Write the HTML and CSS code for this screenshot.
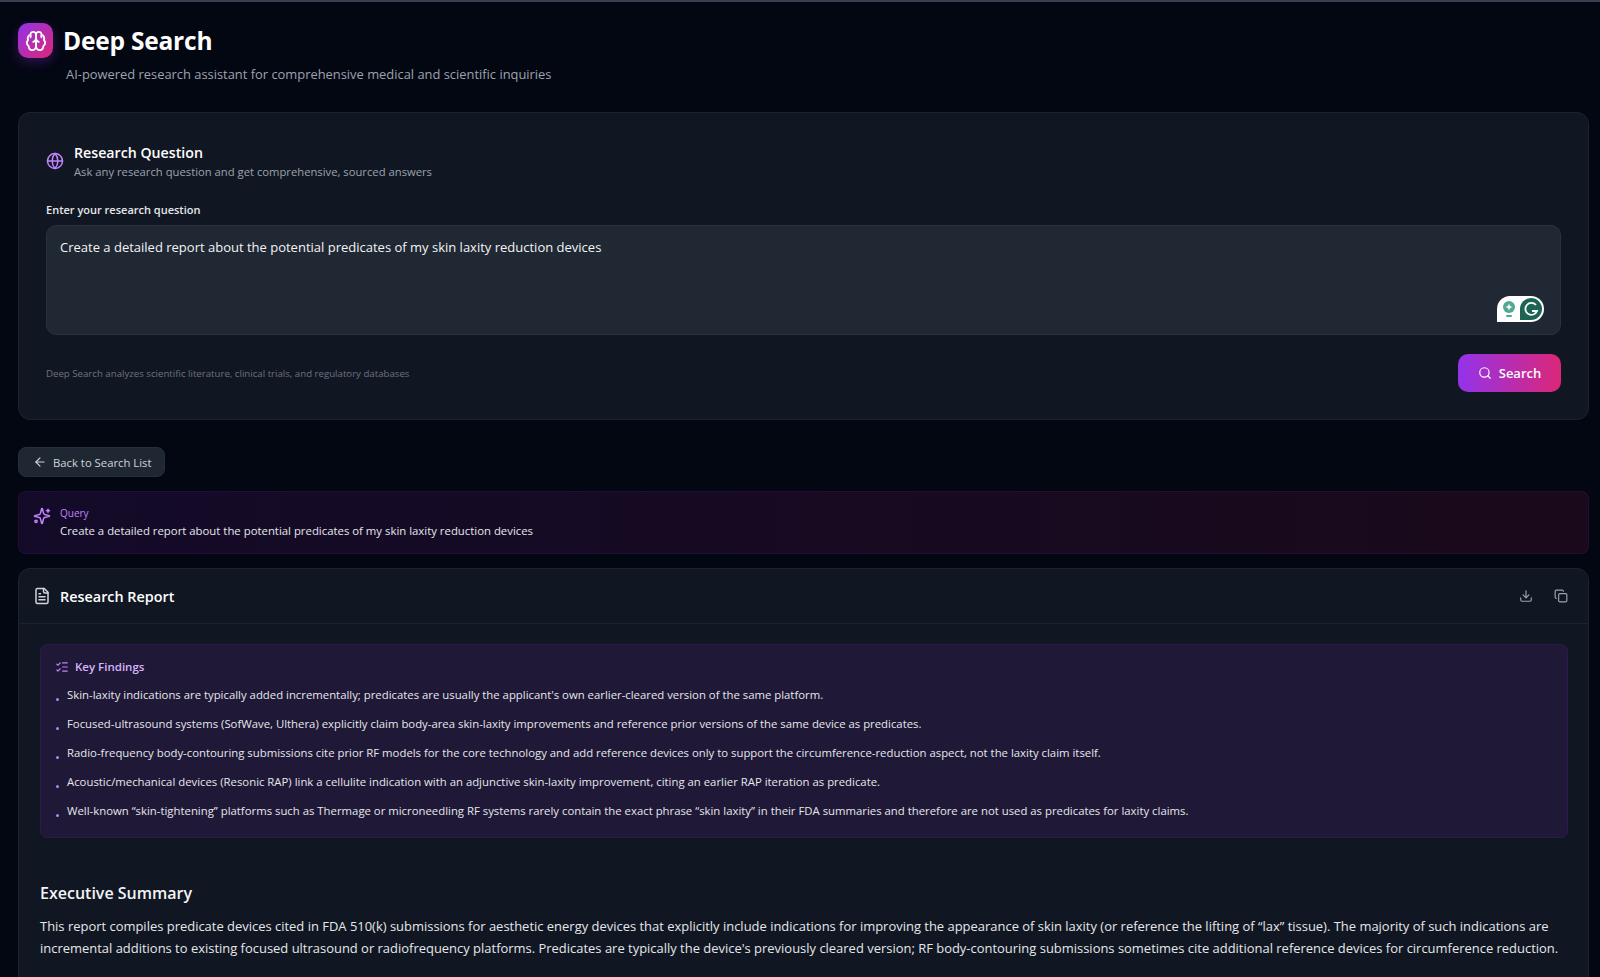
FILE: index.html
```html
<!DOCTYPE html>
<html lang="en">
<head>
    <meta charset="UTF-8">
    <meta name="viewport" content="width=device-width, initial-scale=1.0">
    <title>Deep Search</title>
    <link rel="stylesheet" href="styles.css">
</head>
<body>
    <header class="page-header">
        <div class="title-row">
            <div class="logo">
                <svg width="22" height="22" viewBox="0 0 24 24" fill="none" stroke="#fff" stroke-width="2" stroke-linecap="round" stroke-linejoin="round">
                    <path d="M12 5a3 3 0 1 0-5.997.125 4 4 0 0 0-2.526 5.77 4 4 0 0 0 .556 6.588A4 4 0 1 0 12 18Z"/>
                    <path d="M12 5a3 3 0 1 1 5.997.125 4 4 0 0 1 2.526 5.77 4 4 0 0 1-.556 6.588A4 4 0 1 1 12 18Z"/>
                    <path d="M15 13a4.5 4.5 0 0 1-3-4 4.5 4.5 0 0 1-3 4"/>
                    <path d="M17.6 6.5A3 3 0 0 1 18 8"/><path d="M6.4 6.5A3 3 0 0 0 6 8"/>
                </svg>
            </div>
            <h1>Deep Search</h1>
        </div>
        <p class="subtitle">AI-powered research assistant for comprehensive medical and scientific inquiries</p>
    </header>

    <section class="card question-card">
        <div class="card-heading">
            <svg class="globe" width="18" height="18" viewBox="0 0 24 24" fill="none" stroke="#c084fc" stroke-width="2" stroke-linecap="round" stroke-linejoin="round">
                <circle cx="12" cy="12" r="10"/><path d="M2 12h20"/><path d="M12 2a15 15 0 0 1 0 20a15 15 0 0 1 0-20"/>
            </svg>
            <div>
                <h2>Research Question</h2>
                <p>Ask any research question and get comprehensive, sourced answers</p>
            </div>
        </div>
        <label class="field-label" for="question">Enter your research question</label>
        <div class="textarea-wrap">
            <textarea id="question">Create a detailed report about the potential predicates of my skin laxity reduction devices</textarea>
            <div class="grammarly">
                <svg width="16" height="18" viewBox="0 0 16 18"><circle cx="8" cy="7" r="6" fill="#4fa893"/><path d="M8 3.5l1 2.5 2.500 1-2.500 1-1 2.500-1-2.500-2.500-1 2.500-1z" fill="#fff"/><rect x="5" y="15" width="6" height="2" rx="1" fill="#4fa893"/></svg>
                <svg width="24" height="24" viewBox="0 0 24 24"><path d="M12 1a11 11 0 1 1 0 22H1v-11A11 11 0 0 1 12 1z" fill="#1c6454"/><path d="M17 8a6 6 0 1 0 1 6h-5" fill="none" stroke="#fff" stroke-width="1.800"/></svg>
            </div>
        </div>
        <div class="card-foot">
            <span class="hint">Deep Search analyzes scientific literature, clinical trials, and regulatory databases</span>
            <button class="search-btn" type="button">
                <svg width="14" height="14" viewBox="0 0 24 24" fill="none" stroke="currentColor" stroke-width="2" stroke-linecap="round"><circle cx="11" cy="11" r="8"/><path d="m21 21-4.300-4.300"/></svg>
                Search
            </button>
        </div>
    </section>

    <button class="back-btn" type="button">
        <svg width="14" height="14" viewBox="0 0 24 24" fill="none" stroke="currentColor" stroke-width="2" stroke-linecap="round" stroke-linejoin="round"><path d="m12 19-7-7 7-7"/><path d="M19 12H5"/></svg>
        Back to Search List
    </button>

    <section class="query-box">
        <svg class="query-icon" width="18" height="18" viewBox="0 0 24 24" fill="none" stroke="#c084fc" stroke-width="2" stroke-linecap="round" stroke-linejoin="round">
            <path d="M9.900 15.500A2 2 0 0 0 8.500 14.100l-6.100-1.600a.5.5 0 0 1 0-1l6.100-1.600A2 2 0 0 0 9.900 8.500l1.600-6.100a.5.5 0 0 1 1 0l1.600 6.100a2 2 0 0 0 1.400 1.400l6.100 1.600a.5.5 0 0 1 0 1l-6.100 1.600a2 2 0 0 0-1.400 1.400l-1.600 6.100a.5.5 0 0 1-1 0z"/>
            <path d="M20 3v4"/><path d="M22 5h-4"/><circle cx="4" cy="19" r="1.500"/>
        </svg>
        <div>
            <div class="query-label">Query</div>
            <div class="query-text">Create a detailed report about the potential predicates of my skin laxity reduction devices</div>
        </div>
    </section>

    <section class="card report">
        <div class="report-head">
            <div class="report-title">
                <svg width="18" height="18" viewBox="0 0 24 24" fill="none" stroke="#d1d5db" stroke-width="2" stroke-linecap="round" stroke-linejoin="round">
                    <path d="M15 2H6a2 2 0 0 0-2 2v16a2 2 0 0 0 2 2h12a2 2 0 0 0 2-2V7Z"/><path d="M14 2v4a2 2 0 0 0 2 2h4"/><path d="M8 13h8"/><path d="M8 17h8"/><path d="M8 9h2"/>
                </svg>
                <h3>Research Report</h3>
            </div>
            <div class="report-actions">
                <svg width="14" height="14" viewBox="0 0 24 24" fill="none" stroke="#9ca3af" stroke-width="2" stroke-linecap="round" stroke-linejoin="round"><path d="M12 3v12"/><path d="m7 10 5 5 5-5"/><path d="M21 15v4a2 2 0 0 1-2 2H5a2 2 0 0 1-2-2v-4"/></svg>
                <svg width="14" height="14" viewBox="0 0 24 24" fill="none" stroke="#9ca3af" stroke-width="2" stroke-linecap="round" stroke-linejoin="round"><rect x="8" y="8" width="14" height="14" rx="2"/><path d="M4 16c-1.100 0-2-.9-2-2V4c0-1.100.9-2 2-2h10c1.100 0 2 .9 2 2"/></svg>
            </div>
        </div>
        <div class="report-body">
            <div class="findings">
                <div class="findings-title">
                    <svg width="14" height="14" viewBox="0 0 24 24" fill="none" stroke="#c084fc" stroke-width="2" stroke-linecap="round" stroke-linejoin="round"><path d="M13 5h8"/><path d="M13 12h8"/><path d="M13 19h8"/><path d="m3 17 2 2 4-4"/><path d="m3 7 2 2 4-4"/></svg>
                    Key Findings
                </div>
                <ul>
                    <li>Skin-laxity indications are typically added incrementally; predicates are usually the applicant's own earlier-cleared version of the same platform.</li>
                    <li>Focused-ultrasound systems (SofWave, Ulthera) explicitly claim body-area skin-laxity improvements and reference prior versions of the same device as predicates.</li>
                    <li>Radio-frequency body-contouring submissions cite prior RF models for the core technology and add reference devices only to support the circumference-reduction aspect, not the laxity claim itself.</li>
                    <li>Acoustic/mechanical devices (Resonic RAP) link a cellulite indication with an adjunctive skin-laxity improvement, citing an earlier RAP iteration as predicate.</li>
                    <li>Well-known “skin-tightening” platforms such as Thermage or microneedling RF systems rarely contain the exact phrase “skin laxity” in their FDA summaries and therefore are not used as predicates for laxity claims.</li>
                </ul>
            </div>
            <h4>Executive Summary</h4>
            <p class="summary">This report compiles predicate devices cited in FDA 510(k) submissions for aesthetic energy devices that explicitly include indications for improving the appearance of skin laxity (or reference the lifting of “lax” tissue). The majority of such indications are incremental additions to existing focused ultrasound or radiofrequency platforms. Predicates are typically the device's previously cleared version; RF body-contouring submissions sometimes cite additional reference devices for circumference reduction.</p>
        </div>
    </section>
</body>
</html>
```

FILE: styles.css
```css
* {
    box-sizing: border-box;
}

html, body {
    height: 977px;
    overflow: hidden;
}

body {
    margin: 0;
    padding: 0 11px 0 18px;
    background-color: #030712;
    border-top: 2px solid #374151;
    color: #f3f4f6;
    font-family: "Open Sans", "Noto Sans", sans-serif;
}

h1, h2, h3, h4, p {
    margin: 0;
}

.page-header {
    padding-top: 21px;
    height: 110px;
}

.title-row {
    display: flex;
    align-items: center;
    gap: 10px;
}

.logo {
    width: 35px;
    height: 35px;
    border-radius: 10px;
    background: linear-gradient(135deg, #9333ea, #db2777);
    box-shadow: 0 4px 12px rgba(147, 51, 234, 0.3);
    display: flex;
    align-items: center;
    justify-content: center;
}

h1 {
    font-size: 24.500px;
    font-weight: 700;
    letter-spacing: -0.2px;
    color: #fff;
}

.subtitle {
    margin: 7px 0 0 48px;
    font-size: 12.900px;
    color: #9ca3af;
}

.card {
    background-color: #111722;
    border: 1px solid #1b2330;
    border-radius: 12px;
}

.question-card {
    height: 308px;
    padding: 29px 27px 0;
}

.card-heading {
    display: flex;
    align-items: center;
    gap: 10px;
}

.globe {
    margin-top: -2px;
}

.card-heading h2 {
    font-size: 14.200px;
    font-weight: 600;
    color: #fff;
    line-height: 21px;
}

.card-heading p {
    font-size: 11.250px;
    color: #9ca3af;
    line-height: 18px;
}

.field-label {
    display: block;
    margin-top: 19px;
    font-size: 11px;
    font-weight: 600;
    color: #e5e7eb;
    line-height: 20px;
}

.textarea-wrap {
    position: relative;
    margin-top: 5px;
}

textarea {
    display: block;
    width: 100%;
    height: 110px;
    padding: 11px 13px;
    background-color: #202833;
    border: 1px solid #2a323e;
    border-radius: 10px;
    color: #f3f4f6;
    font-family: inherit;
    font-size: 13px;
    line-height: 20px;
    resize: none;
    outline: none;
}

.grammarly {
    position: absolute;
    right: 17px;
    bottom: 13px;
    width: 47px;
    height: 26px;
    background-color: #fff;
    border-radius: 13px 13px 13px 0;
    display: flex;
    align-items: center;
    justify-content: space-between;
    padding: 0 1px 0 4px;
}

.card-foot {
    display: flex;
    justify-content: space-between;
    align-items: center;
    margin-top: 19px;
}

.hint {
    font-size: 9.660px;
    color: #6b7280;
}

.search-btn {
    width: 103px;
    height: 38px;
    border: none;
    border-radius: 10px;
    background: linear-gradient(90deg, #9333ea, #db2777);
    color: #fff;
    font-family: inherit;
    font-size: 13px;
    font-weight: 600;
    display: flex;
    align-items: center;
    justify-content: center;
    gap: 7px;
}

.back-btn {
    display: flex;
    align-items: center;
    gap: 6px;
    margin-top: 27px;
    width: 147px;
    height: 30px;
    padding: 0 14px;
    background-color: #1f2733;
    border: 1px solid #262f3c;
    border-radius: 8px;
    color: #d1d5db;
    font-family: inherit;
    font-size: 11.300px;
    white-space: nowrap;
}

.back-btn svg {
    flex-shrink: 0;
}

.query-box {
    display: flex;
    gap: 9px;
    margin-top: 14px;
    height: 63px;
    padding: 13px 14px 0;
    background: linear-gradient(90deg, rgba(88, 28, 135, 0.2), rgba(131, 24, 67, 0.18));
    border: 1px solid rgba(88, 28, 135, 0.22);
    border-radius: 8px;
}

.query-icon {
    margin-top: 2px;
}

.query-label {
    font-size: 10px;
    color: #c084fc;
    line-height: 16px;
}

.query-text {
    font-size: 11.360px;
    color: #e5e7eb;
    line-height: 20px;
}

.report {
    margin-top: 14px;
    height: 440px;
}

.report-head {
    display: flex;
    justify-content: space-between;
    align-items: center;
    height: 55px;
    padding: 0 20px 0 14px;
    border-bottom: 1px solid #1b2330;
}

.report-title {
    display: flex;
    align-items: center;
    gap: 9px;
}

.report-title h3 {
    font-size: 14.400px;
    font-weight: 600;
    color: #fff;
}

.report-actions {
    display: flex;
    gap: 21px;
}

.report-body {
    padding: 20px 20px 0 21px;
}

.findings {
    height: 194px;
    padding: 12px 14px;
    background-color: rgba(88, 28, 135, 0.2);
    border: 1px solid rgba(88, 28, 135, 0.3);
    border-radius: 8px;
}

.findings-title {
    display: flex;
    align-items: center;
    gap: 6px;
    font-size: 11.500px;
    font-weight: 600;
    color: #d8b4fe;
    line-height: 20px;
}

.findings ul {
    list-style: none;
    margin: 8px 0 0;
    padding: 0;
}

.findings li {
    position: relative;
    padding-left: 12px;
    font-size: 11.350px;
    line-height: 20px;
    margin-bottom: 9px;
    color: #e5e7eb;
}

.findings li::before {
    content: "";
    position: absolute;
    left: 1px;
    top: 13px;
    width: 3px;
    height: 3px;
    border-radius: 50%;
    background-color: #a78bfa;
}

h4 {
    margin-top: 44px;
    font-size: 16px;
    font-weight: 600;
    color: #f3f4f6;
}

.summary {
    margin-top: 11px;
    font-size: 12.960px;
    line-height: 22px;
    color: #e5e7eb;
}
```
